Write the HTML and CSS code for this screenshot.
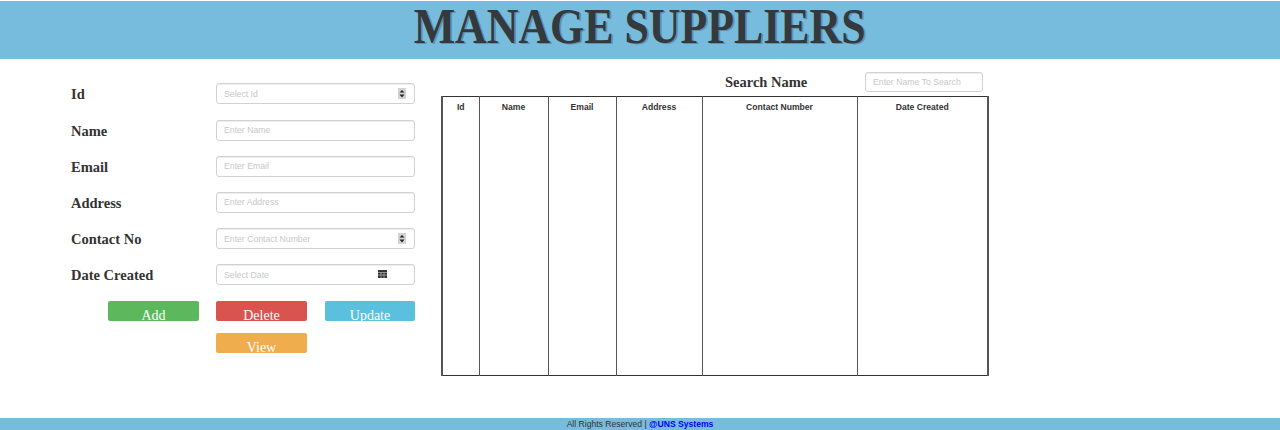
FILE: index.html
```html
<!DOCTYPE html>
<html lang="en">

<head>
    <meta charset="UTF-8">
    <title>Manage Suppliers</title>
    <link rel="stylesheet" href="styles.css">
</head>

<body>
    <header class="banner">
        <h1 class="banner-title">Manage Suppliers</h1>
    </header>

    <main class="content">
        <form class="supplier-form">
            <div class="field">
                <label class="field-label">Id</label>
                <div class="field-box">
                    <input class="text-input" type="text" placeholder="Select Id">
                    <svg class="spin-icon" width="8" height="11" viewBox="0 0 8 11">
                        <rect width="8" height="11" fill="#d4d4d4" />
                        <path d="M4 2 L6.5 4.5 H1.5 Z M4 9.5 L6.5 6.5 H1.5 Z" fill="#222" />
                    </svg>
                </div>
            </div>
            <div class="field">
                <label class="field-label">Name</label>
                <div class="field-box"><input class="text-input" type="text" placeholder="Enter Name"></div>
            </div>
            <div class="field">
                <label class="field-label">Email</label>
                <div class="field-box"><input class="text-input" type="text" placeholder="Enter Email"></div>
            </div>
            <div class="field">
                <label class="field-label">Address</label>
                <div class="field-box"><input class="text-input" type="text" placeholder="Enter Address"></div>
            </div>
            <div class="field">
                <label class="field-label">Contact No</label>
                <div class="field-box">
                    <input class="text-input" type="text" placeholder="Enter Contact Number">
                    <svg class="spin-icon" width="8" height="11" viewBox="0 0 8 11">
                        <rect width="8" height="11" fill="#d4d4d4" />
                        <path d="M4 2 L6.5 4.5 H1.5 Z M4 9.5 L6.5 6.5 H1.5 Z" fill="#222" />
                    </svg>
                </div>
            </div>
            <div class="field">
                <label class="field-label">Date Created</label>
                <div class="field-box">
                    <input class="text-input" type="text" placeholder="Select Date">
                    <svg class="date-icon" width="9" height="8" viewBox="0 0 9 8">
                        <path d="M0 0 H9 V8 H0 Z" fill="#333" />
                        <path d="M0 2.5 H9 M0 5 H9 M3 2.5 V8 M6 2.5 V8" stroke="#aaa" stroke-width="0.8" />
                    </svg>
                </div>
            </div>
            <div class="actions">
                <button class="btn btn-add" type="button">Add</button>
                <button class="btn btn-delete" type="button">Delete</button>
                <button class="btn btn-update" type="button">Update</button>
                <button class="btn btn-view" type="button">View</button>
            </div>
        </form>

        <section class="listing">
            <div class="search-row">
                <label class="search-label">Search Name</label>
                <input class="text-input search-input" type="text" placeholder="Enter Name To Search">
            </div>
            <table class="supplier-table">
                <colgroup>
                    <col class="col-id">
                    <col class="col-name">
                    <col class="col-email">
                    <col class="col-address">
                    <col class="col-contact">
                    <col>
                </colgroup>
                <thead>
                    <tr>
                        <th>Id</th>
                        <th>Name</th>
                        <th>Email</th>
                        <th>Address</th>
                        <th>Contact Number</th>
                        <th>Date Created</th>
                    </tr>
                </thead>
                <tbody>
                    <tr>
                        <td></td>
                        <td></td>
                        <td></td>
                        <td></td>
                        <td></td>
                        <td></td>
                    </tr>
                </tbody>
            </table>
        </section>
    </main>

    <footer class="page-footer">All Rights Reserved | <a class="footer-link" href="#">@UNS Systems</a></footer>
</body>

</html>
```

FILE: styles.css
```css
* {
    margin: 0;
    padding: 0;
    box-sizing: border-box;
}

html,
body {
    width: 100%;
    height: 100%;
    background: #fff;
}

body {
    display: flex;
    flex-direction: column;
    overflow: hidden;
    font-family: "Liberation Serif", serif;
    color: #333;
}

.banner {
    height: 58px;
    margin-top: 1px;
    background: #77bcdd;
    text-align: center;
}

.banner-title {
    display: inline-block;
    font-size: 50px;
    line-height: 50px;
    font-weight: bold;
    text-transform: uppercase;
    color: #33393d;
    text-shadow: 2px 1px 0 #5f93ad;
    transform: scaleX(.877);
}

.content {
    display: flex;
    align-items: flex-start;
    padding: 13px 0 0 71px;
}

.supplier-form {
    width: 344px;
    margin-top: 11.4px;
    margin-right: 26px;
}

.field {
    display: flex;
    align-items: center;
    height: 21px;
    margin-bottom: 15.2px;
}

.field-label {
    width: 145px;
    padding-top: 2px;
    font-size: 14.5px;
    font-weight: bold;
}

.field-box {
    position: relative;
    width: 199px;
}

.text-input {
    display: block;
    width: 100%;
    height: 21px;
    padding: 0 7px;
    border: 1px solid #d2d2d2;
    border-radius: 3px;
    box-shadow: inset 0 1px 1px rgba(0, 0, 0, .075);
    font-family: "Liberation Sans", sans-serif;
    font-size: 8.7px;
    color: #555;
    outline: none;
}

.text-input::placeholder {
    color: #c8c8c8;
    opacity: 1;
}

.spin-icon {
    position: absolute;
    top: 5px;
    right: 9px;
}

.date-icon {
    position: absolute;
    top: 6px;
    right: 28px;
}

.actions {
    display: grid;
    grid-template-columns: 108px 109px 90px;
    row-gap: 12px;
    margin-left: 37px;
}

.btn {
    width: 91px;
    height: 20px;
    padding-top: 8px;
    border: 1px solid transparent;
    border-radius: 2px;
    font-family: "Liberation Serif", serif;
    font-size: 14px;
    line-height: 12px;
    color: #fff;
}

.btn-add {
    background: #5cb85c;
}

.btn-delete {
    background: #d9534f;
}

.btn-update {
    width: 90px;
    background: #5bc0de;
}

.btn-view {
    grid-column: 2;
    background: #f0ad4e;
}

.listing {
    width: 548px;
}

.search-row {
    display: flex;
    align-items: flex-start;
    height: 24px;
    padding-left: 284px;
}

.search-label {
    width: 140px;
    font-size: 14.5px;
    line-height: 20px;
    font-weight: bold;
}

.search-input {
    width: 118px;
    height: 20px;
}

.supplier-table {
    width: 548px;
    height: 280px;
    table-layout: fixed;
    border-collapse: collapse;
    border: 2px solid #555;
    border-top: 1px solid #333;
    border-bottom: 1px solid #333;
    font-family: "Liberation Sans", sans-serif;
}

.col-id {
    width: 37px;
}

.col-name {
    width: 69px;
}

.col-email {
    width: 68px;
}

.col-address {
    width: 86px;
}

.col-contact {
    width: 155px;
}

.supplier-table th,
.supplier-table td {
    border-left: 1px solid #555;
    border-right: 1px solid #555;
}

.supplier-table th {
    height: 21px;
    font-size: 8.6px;
    color: #333;
    vertical-align: middle;
}

.page-footer {
    height: 12px;
    margin-top: auto;
    background: #77bcdd;
    text-align: center;
    font-family: "Liberation Sans", sans-serif;
    font-size: 8.6px;
    line-height: 12px;
    color: #333;
}

.footer-link {
    font-weight: bold;
    color: #00f;
    text-decoration: none;
}
```
